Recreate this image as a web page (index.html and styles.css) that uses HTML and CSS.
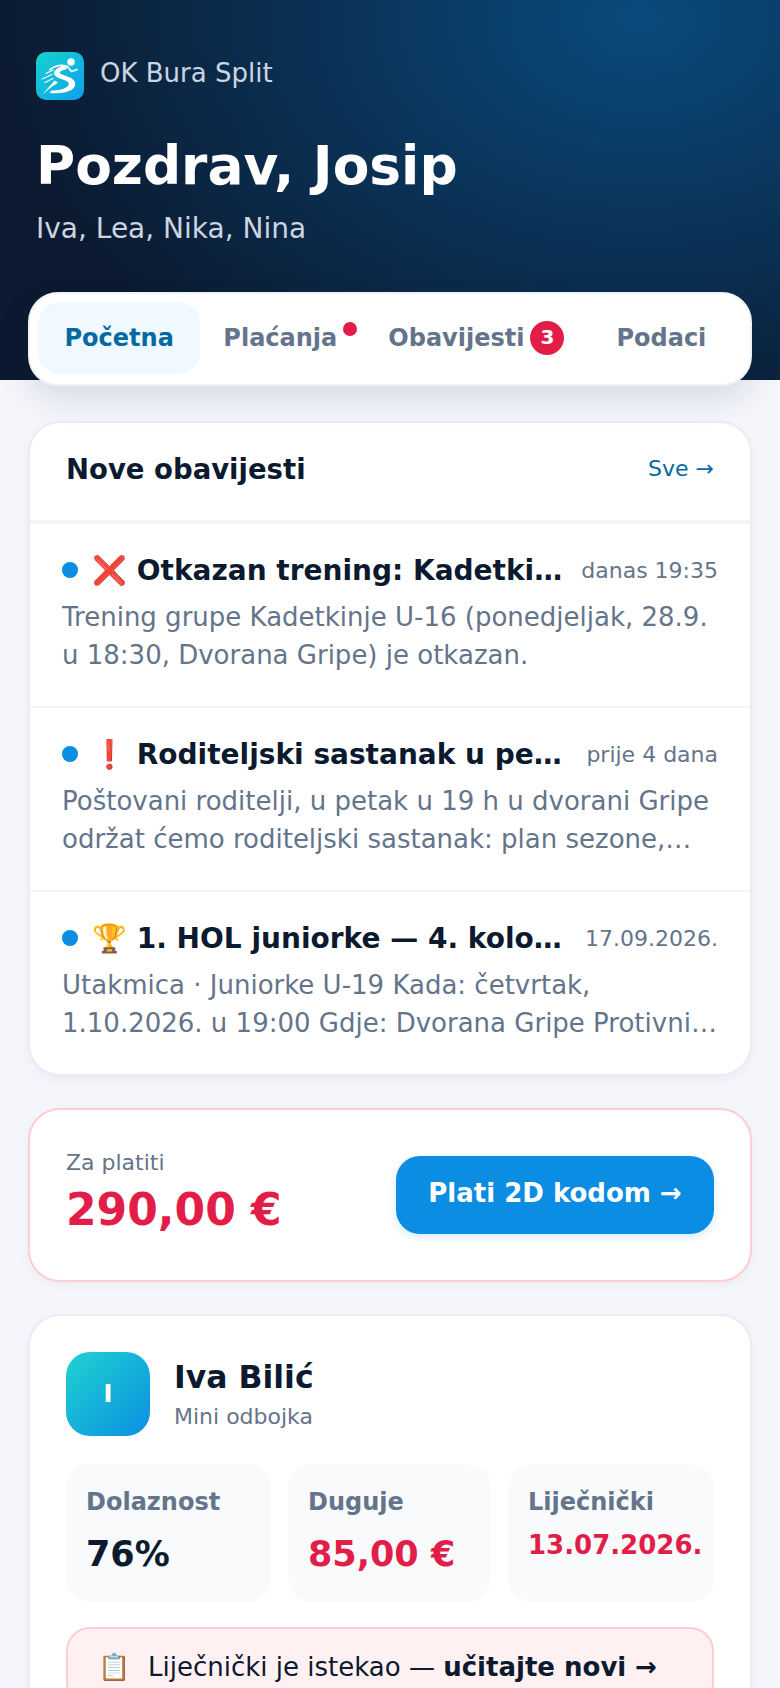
FILE: index.html
```html
<!DOCTYPE html>
<html lang="hr">

<head>
    <meta charset="UTF-8">
    <meta name="viewport" content="width=device-width, initial-scale=1.0">
    <title>OK Bura Split</title>
    <link rel="stylesheet" href="styles.css">
</head>

<body>
    <header class="hero">
        <div class="brand">
            <svg class="brand_logo" viewBox="0 0 48 48">
                <defs>
                    <linearGradient id="logoGrad" x1="0" y1="0" x2="1" y2="1">
                        <stop offset="0" stop-color="#17d3cd" />
                        <stop offset="1" stop-color="#0ca0ee" />
                    </linearGradient>
                </defs>
                <rect width="48" height="48" rx="10" fill="url(#logoGrad)" />
                <circle cx="35" cy="10" r="3.700" fill="#fff" />
                <path fill="#fff" d="M30 13C24 14 17 18 18 22C19 26 28 27 32 30C34 32 32 35 28 36.500C24 38 19 38.500 15 38.500L14 41C20 41.500 30 41.500 36 37.500C41 34 40 29 35 26C31 24 26 23 24 21.500C23 20 26 18 31 17z" />
                <path fill="#fff" d="M6.500 42.500L18.500 28.500L22 30.500L13 37z" />
                <g fill="none" stroke="#fff" stroke-linecap="round" stroke-linejoin="round">
                    <path stroke-width="1.700" d="M14 17.500C19 13.500 26 12 31.500 14.500L35.500 19.500L41 17.500" />
                    <path stroke-width="1.100" d="M10 21.500L17 18M6 27L16 22.500M9 30.500L17 26.500" />
                </g>
            </svg>
            <span class="brand_name">OK Bura Split</span>
        </div>
        <h1>Pozdrav, Josip</h1>
        <p class="hero_kids">Iva, Lea, Nika, Nina</p>
    </header>

    <nav class="tabs">
        <a class="tab tab_active">Početna</a>
        <a class="tab tab_pay">Plaćanja<i class="tab_dot"></i></a>
        <a class="tab">Obavijesti<b class="tab_count">3</b></a>
        <a class="tab">Podaci</a>
    </nav>

    <main class="content">
        <section class="card">
            <div class="news_head">
                <h2>Nove obavijesti</h2>
                <a class="news_all">Sve →</a>
            </div>
            <article class="news_item">
                <div class="news_top">
                    <i class="news_dot"></i>
                    <h3>❌ Otkazan trening: Kadetkinje U-16</h3>
                    <time>danas 19:35</time>
                </div>
                <p>Trening grupe Kadetkinje U-16 (ponedjeljak, 28.9. u 18:30, Dvorana Gripe) je otkazan.</p>
            </article>
            <article class="news_item">
                <div class="news_top">
                    <i class="news_dot"></i>
                    <h3>❗ Roditeljski sastanak u petak u 19 h</h3>
                    <time>prije 4 dana</time>
                </div>
                <p>Poštovani roditelji, u petak u 19 h u dvorani Gripe održat ćemo roditeljski sastanak: plan sezone, članarina i putovanja.</p>
            </article>
            <article class="news_item">
                <div class="news_top">
                    <i class="news_dot"></i>
                    <h3>🏆 1. HOL juniorke — 4. kolo Split</h3>
                    <time>17.09.2026.</time>
                </div>
                <p>Utakmica · Juniorke U-19 Kada: četvrtak, 1.10.2026. u 19:00 Gdje: Dvorana Gripe Protivnik: OK Marina Kaštela</p>
            </article>
        </section>

        <section class="card pay">
            <div>
                <div class="pay_label">Za platiti</div>
                <div class="pay_sum">290,00 €</div>
            </div>
            <a class="pay_btn">Plati 2D kodom →</a>
        </section>

        <section class="card kid">
            <div class="kid_head">
                <div class="kid_avatar">I</div>
                <div>
                    <h2>Iva Bilić</h2>
                    <div class="kid_group">Mini odbojka</div>
                </div>
            </div>
            <div class="stats">
                <div class="stat">
                    <div class="stat_label">Dolaznost</div>
                    <div class="stat_value">76%</div>
                </div>
                <div class="stat">
                    <div class="stat_label">Duguje</div>
                    <div class="stat_value stat_red">85,00 €</div>
                </div>
                <div class="stat">
                    <div class="stat_label">Liječnički</div>
                    <div class="stat_value stat_red stat_small">13.07.2026.</div>
                </div>
            </div>
            <div class="alert">
                <span class="alert_icon">📋</span>
                <span>Liječnički je istekao — <b>učitajte novi →</b></span>
            </div>
        </section>
    </main>
</body>

</html>
```

FILE: styles.css
```css
html,
body {
    height: 1688px;
    overflow: hidden;
}

body {
    margin: 0;
    background: #f4f6fb;
    color: #0b1a2f;
    font-family: "DejaVu Sans", sans-serif;
}

h1,
h2,
h3,
p {
    margin: 0;
}

/* header */
.hero {
    height: 380px;
    box-sizing: border-box;
    padding: 52px 36px 0;
    background:
        radial-gradient(ellipse 640px 450px at 82% 5%, #0a4a7c 0%, rgba(10, 74, 124, 0) 100%),
        #0b1a30;
    color: #fff;
}

.brand {
    display: flex;
    align-items: center;
    gap: 16px;
    font-size: 26px;
    color: #cbd5e1;
}

.brand_logo {
    width: 48px;
    height: 48px;
}

.brand_name {
    padding-bottom: 6px;
}

.hero h1 {
    margin-top: 32px;
    font-size: 53.400px;
    line-height: 68px;
}

.hero_kids {
    margin-top: 11px;
    font-size: 28px;
    line-height: 36px;
    color: #cbd5e1;
}

/* tabs */
.tabs {
    position: relative;
    display: flex;
    margin: -88px 28px 0;
    padding: 8px 8px 10px;
    height: 94px;
    box-sizing: border-box;
    background: #fff;
    border: 2px solid #eef2f7;
    border-radius: 30px;
    box-shadow: 0 12px 32px rgba(11, 26, 47, 0.12);
}

.tab {
    position: relative;
    display: flex;
    align-items: center;
    gap: 6px;
    padding: 0 26px;
    border-radius: 22px;
    font-size: 24px;
    font-weight: 700;
    color: #64748b;
}

.tab_active {
    padding: 0 26.500px;
    background: #eff9ff;
    color: #0369a1;
}

.tab_pay {
    padding: 0 25px 0 23px;
}

.tab_dot {
    position: absolute;
    top: 20px;
    right: 5px;
    width: 14px;
    height: 14px;
    border-radius: 50%;
    background: #e11d48;
}

.tab_count {
    display: flex;
    align-items: center;
    justify-content: center;
    width: 34px;
    height: 34px;
    box-sizing: border-box;
    padding-bottom: 3px;
    border-radius: 50%;
    background: #e11d48;
    color: #fff;
    font-size: 20px;
}

/* cards */
.content {
    display: flex;
    flex-direction: column;
    gap: 32px;
    margin: 35px 28px 0;
}

.card {
    background: #fff;
    border: 2px solid #e9edf3;
    border-radius: 32px;
    box-shadow: 0 4px 12px rgba(11, 26, 47, 0.04);
    overflow: hidden;
}

.news_head {
    display: flex;
    align-items: center;
    justify-content: space-between;
    height: 91px;
    padding: 0 36px 6px;
    border-bottom: 4px solid #f1f5f9;
}

.news_head h2 {
    font-size: 27.500px;
}

.news_all {
    font-size: 22px;
    color: #0369a1;
}

.news_item {
    padding: 28px 32px 32px;
    border-top: 2px solid #f1f5f9;
}

.news_item:first-of-type {
    border-top: 0;
}

.news_top {
    display: flex;
    align-items: center;
    gap: 14px;
}

.news_dot {
    flex: none;
    width: 16px;
    height: 16px;
    border-radius: 50%;
    background: #0b8de3;
}

.news_top h3 {
    flex: 1;
    min-width: 0;
    padding-top: 2px;
    font-size: 28px;
    line-height: 34px;
    white-space: nowrap;
    overflow: hidden;
    text-overflow: ellipsis;
}

.news_top time {
    flex: none;
    margin-left: 4px;
    font-size: 22px;
    color: #64748b;
}

.news_item p {
    display: -webkit-box;
    -webkit-box-orient: vertical;
    -webkit-line-clamp: 2;
    overflow: hidden;
    margin-top: 10px;
    font-size: 26px;
    line-height: 38px;
    color: #64748b;
}

/* za platiti */
.pay {
    display: flex;
    align-items: center;
    justify-content: space-between;
    height: 174px;
    box-sizing: border-box;
    padding: 0 36px;
    border-color: #fecdd3;
}

.pay_label {
    font-size: 22px;
    line-height: 26px;
    color: #64748b;
}

.pay_sum {
    margin-top: 4px;
    font-size: 44px;
    line-height: 60px;
    font-weight: 700;
    color: #e11d48;
}

.pay_btn {
    display: flex;
    align-items: center;
    justify-content: center;
    width: 318px;
    height: 78px;
    box-sizing: border-box;
    padding-bottom: 4px;
    border-radius: 24px;
    background: #0b8de3;
    color: #fff;
    font-size: 26px;
    font-weight: 700;
    box-shadow: 0 3px 8px rgba(11, 141, 227, 0.18);
}

/* dijete */
.kid {
    padding: 36px;
}

.kid_head {
    display: flex;
    align-items: center;
    gap: 24px;
}

.kid_avatar {
    display: flex;
    align-items: center;
    justify-content: center;
    width: 84px;
    height: 84px;
    border-radius: 24px;
    background: linear-gradient(135deg, #1fd3d0, #0c8fe3);
    color: #fff;
    font-size: 24px;
    font-weight: 700;
}

.kid_head h2 {
    font-size: 31.500px;
    line-height: 38px;
}

.kid_group {
    margin-top: 8px;
    font-size: 22px;
    line-height: 26px;
    color: #64748b;
}

.stats {
    display: grid;
    grid-template-columns: 205px 203px 206px;
    gap: 17px;
    margin-top: 28px;
}

.stat {
    height: 138px;
    box-sizing: border-box;
    padding: 24px 20px;
    border-radius: 24px;
    background: #f8fafc;
}

.stat_label {
    font-size: 24px;
    line-height: 28px;
    font-weight: 700;
    color: #64748b;
}

.stat_value {
    margin-top: 18px;
    font-size: 35px;
    line-height: 41px;
    font-weight: 700;
}

.stat_red {
    color: #e11d48;
}

.stat_small {
    margin-top: 14px;
    font-size: 26px;
    line-height: 30px;
}

.alert {
    display: flex;
    align-items: center;
    gap: 18px;
    margin-top: 25px;
    padding: 23px 30px;
    border: 2px solid #fecdd3;
    border-radius: 24px;
    background: #fff1f2;
    font-size: 26px;
    line-height: 30px;
}

.alert_icon {
    font-size: 26px;
}
```
